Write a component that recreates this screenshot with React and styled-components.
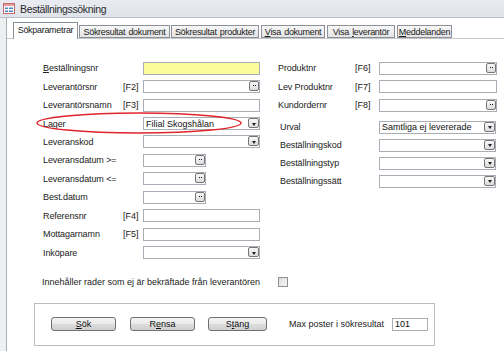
import React from "react";
import styled, { createGlobalStyle } from "styled-components";

const Global = createGlobalStyle`
  html, body {
    margin: 0;
    padding: 0;
    background: #fff;
  }
  body {
    font-family: "Liberation Sans", Arial, sans-serif;
    color: #1a1a1a;
  }
`;

const Window = styled.div`
  position: relative;
  width: 504px;
  height: 351px;
  display: flex;
  flex-direction: column;
  overflow: hidden;
  background: #fff;
`;

const TitleBar = styled.div`
  height: 17px;
  display: flex;
  align-items: center;
  gap: 5px;
  padding-left: 3px;
  background: linear-gradient(#e9ecf1, #dfe3ea);
  border-bottom: 1px solid #b9bec7;
  font-size: 10.5px;
  letter-spacing: -0.35px;
  color: #2b2b2b;
`;

const Body = styled.div`
  flex: 1;
  display: flex;
`;

const LeftEdge = styled.div`
  width: 6px;
  background: #eeeff1;
  border-right: 1px solid #a9adb3;
`;

const Main = styled.div`
  flex: 1;
  display: flex;
  flex-direction: column;
`;

const TabStrip = styled.div`
  display: flex;
  align-items: flex-end;
  height: 16px;
  margin-top: 4px;
  padding-left: 6px;
  border-bottom: 1px solid #c4c7cc;
`;

const Tab = styled.div`
  width: ${(p) => p.$w}px;
  height: ${(p) => (p.$active ? 17 : 13)}px;
  margin-right: ${(p) => p.$gap || 0}px;
  margin-bottom: ${(p) => (p.$active ? -1 : 0)}px;
  display: flex;
  align-items: center;
  justify-content: center;
  box-sizing: border-box;
  border: 1px solid #8d9097;
  border-bottom: ${(p) => (p.$active ? "none" : "1px solid #8d9097")};
  background: ${(p) =>
    p.$active ? "#fff" : "linear-gradient(#f7f7f7, #e4e4e4)"};
  font-size: 9px;
  letter-spacing: -0.3px;
  word-spacing: 1px;
  padding-bottom: ${(p) => (p.$active ? 3 : 0)}px;
  color: #1a1a1a;
  white-space: pre;
`;

const Form = styled.div`
  display: flex;
  flex-direction: column;
`;

const Columns = styled.div`
  display: flex;
  gap: 18px;
  padding: 20px 0 0 36px;
`;

const Column = styled.div`
  display: flex;
  flex-direction: column;
  width: ${(p) => p.$w}px;
`;

const Group = styled.div`
  display: flex;
  flex-direction: column;
  margin-top: ${(p) => p.$top || 0}px;
`;

const Row = styled.div`
  display: grid;
  grid-template-columns: ${(p) => p.$cols};
  height: ${(p) => p.$h}px;
  align-items: center;
`;

const Label = styled.span`
  font-size: 9px;
  letter-spacing: -0.1px;
  padding-left: ${(p) => p.$indent || 0}px;
  white-space: nowrap;
  color: #222;
`;

const Key = styled.span`
  font-size: 9px;
  color: #222;
`;

const Box = styled.div`
  position: relative;
  width: ${(p) => p.$w}px;
  height: 13px;
  box-sizing: border-box;
  border: 1px solid #a9aeb6;
  background: ${(p) => (p.$yellow ? "#fbfb9c" : "#fff")};
  display: flex;
  align-items: center;
  padding-left: 2px;
  font-size: 9px;
  color: #111;
  white-space: nowrap;
`;

const MiniButton = styled.div`
  position: absolute;
  right: 0px;
  top: 0px;
  width: ${(p) => p.$w || 10}px;
  height: 10px;
  box-sizing: border-box;
  border: 1px solid #767676;
  border-radius: 2px;
  background: linear-gradient(#f8f8f8, #dcdcdc);
  display: flex;
  align-items: center;
  justify-content: center;
  gap: 1px;
`;

const Dot = styled.span`
  width: 1px;
  height: 1px;
  margin-top: -1px;
  background: #111;
`;

const Arrow = styled.span`
  width: 0;
  height: 0;
  margin-top: 2px;
  border-left: 2.5px solid transparent;
  border-right: 2.5px solid transparent;
  border-top: 3px solid #222;
`;

const CheckRow = styled.div`
  display: grid;
  grid-template-columns: 236px 10px;
  align-items: center;
  height: 14px;
  margin-top: 13px;
  padding-left: 35px;
  font-size: 9px;
  color: #222;
`;

const CheckBox = styled.div`
  width: 10px;
  height: 10px;
  box-sizing: border-box;
  border: 1px solid #8e8f8f;
  background: linear-gradient(135deg, #dcdcdc, #f6f6f6);
`;

const Frame = styled.div`
  width: 401px;
  height: 43px;
  box-sizing: border-box;
  margin: 14px 0 0 27px;
  border: 1px solid #bdbdbd;
  box-shadow: inset 1px 1px 0 #fff;
  display: flex;
  align-items: center;
  padding-left: 16px;
`;

const Button = styled.div`
  width: ${(p) => p.$w}px;
  height: 14px;
  margin-right: ${(p) => p.$gap || 0}px;
  box-sizing: border-box;
  border: 1px solid #707070;
  border-radius: 3px;
  background: linear-gradient(#f3f3f3 0%, #ebebeb 50%, #dddddd 51%, #cfcfcf 100%);
  display: flex;
  align-items: center;
  justify-content: center;
  font-size: 9px;
  color: #111;
`;

const MaxLabel = styled.span`
  font-size: 9px;
  margin-left: 9px;
  margin-right: 8px;
  white-space: nowrap;
  color: #222;
`;

const Ellipse = styled.svg`
  position: absolute;
  left: 36px;
  top: 112px;
  overflow: visible;
`;

const FormIcon = () => (
  <svg width="12" height="11" viewBox="0 0 12 11">
    <rect x="0.5" y="0.5" width="11" height="10" fill="#fff" stroke="#c86a6a" />
    <rect x="1" y="1" width="10" height="2" fill="#e39b9b" />
    <rect x="2" y="4.5" width="3" height="1.5" fill="#4f81bd" />
    <rect x="6" y="4.5" width="4" height="1.5" fill="#4f81bd" />
    <rect x="2" y="7.5" width="3" height="1.5" fill="#4f81bd" />
    <rect x="6" y="7.5" width="4" height="1.5" fill="#4f81bd" />
  </svg>
);

function Field({ w, yellow, kind, children }) {
  return (
    <Box $w={w} $yellow={yellow}>
      {children}
      {kind === "lookup" && (
        <MiniButton>
          <Dot />
          <Dot />
        </MiniButton>
      )}
      {kind === "combo" && (
        <MiniButton $w={11}>
          <Arrow />
        </MiniButton>
      )}
    </Box>
  );
}

const leftRows = [
  { label: <><u>B</u>eställningsnr</>, w: 117, yellow: true },
  { label: "Leverantörsnr", key: "[F2]", w: 117, kind: "lookup" },
  { label: "Leverantörsnamn", key: "[F3]", w: 117 },
  { label: "Lager", w: 117, kind: "combo", value: "Filial Skogshålan" },
  { label: "Leveranskod", w: 117, kind: "combo" },
  { label: "Leveransdatum >=", w: 63, kind: "lookup" },
  { label: "Leveransdatum <=", w: 63, kind: "lookup" },
  { label: "Best.datum", w: 63, kind: "lookup" },
  { label: "Referensnr", key: "[F4]", w: 117 },
  { label: "Mottagarnamn", key: "[F5]", w: 117 },
  { label: "Inköpare", w: 117, kind: "combo" },
];

const rightTop = [
  { label: "Produktnr", key: "[F6]", kind: "lookup" },
  { label: "Lev Produktnr", key: "[F7]" },
  { label: "Kundordernr", key: "[F8]", kind: "lookup" },
];

const rightBottom = [
  { label: "Urval", value: "Samtliga ej levererade" },
  { label: "Beställningskod" },
  { label: "Beställningstyp" },
  { label: "Beställningssätt" },
];

const tabs = [
  { text: "Sökparametrar", w: 65, gap: 1, active: true },
  { text: "Sökresultat dokument", w: 91, gap: 1 },
  { text: "Sökresultat produkter", w: 88, gap: 2 },
  { text: <><u>V</u>isa dokument</>, w: 64, gap: 2 },
  { text: <>{"Visa "}<u>l</u>everantör</>, w: 68, gap: 2 },
  { text: <><u>M</u>eddelanden</>, w: 55 },
];

export default function App() {
  return (
    <>
      <Global />
      <Window>
        <TitleBar>
          <FormIcon />
          <span>Beställningssökning</span>
        </TitleBar>
        <Body>
          <LeftEdge />
          <Main>
            <TabStrip>
              {tabs.map((t, i) => (
                <Tab key={i} $w={t.w} $gap={t.gap} $active={t.active}>
                  {t.text}
                </Tab>
              ))}
            </TabStrip>
            <Form>
              <Columns>
                <Column $w={217}>
                  {leftRows.map((r, i) => (
                    <Row key={i} $cols="80px 20px 117px" $h={18.45}>
                      <Label>{r.label}</Label>
                      <Key>{r.key}</Key>
                      <Field w={r.w} yellow={r.yellow} kind={r.kind}>
                        {r.value}
                      </Field>
                    </Row>
                  ))}
                </Column>
                <Column $w={219}>
                  <Group>
                    {rightTop.map((r, i) => (
                      <Row key={i} $cols="77px 24px 118px" $h={18.45}>
                        <Label>{r.label}</Label>
                        <Key>{r.key}</Key>
                        <Field w={118} kind={r.kind} />
                      </Row>
                    ))}
                  </Group>
                  <Group $top={4}>
                    {rightBottom.map((r, i) => (
                      <Row key={i} $cols="101px 118px" $h={18}>
                        <Label $indent={2}>{r.label}</Label>
                        <Field w={117} kind="combo">
                          {r.value}
                        </Field>
                      </Row>
                    ))}
                  </Group>
                </Column>
              </Columns>
              <CheckRow>
                <span>Innehåller rader som ej är bekräftade från leverantören</span>
                <CheckBox />
              </CheckRow>
              <Frame>
                <Button $w={65} $gap={14}>
                  <span><u>S</u>ök</span>
                </Button>
                <Button $w={65} $gap={13}>
                  <span>R<u>e</u>nsa</span>
                </Button>
                <Button $w={59} $gap={13}>
                  <span>S<u>t</u>äng</span>
                </Button>
                <MaxLabel>Max poster i sökresultat</MaxLabel>
                <Box $w={36}>101</Box>
              </Frame>
            </Form>
          </Main>
        </Body>
        <Ellipse width="206" height="22">
          <ellipse
            cx="103"
            cy="11"
            rx="102"
            ry="10"
            fill="none"
            stroke="#e0252b"
            strokeWidth="1.4"
          />
        </Ellipse>
      </Window>
    </>
  );
}
